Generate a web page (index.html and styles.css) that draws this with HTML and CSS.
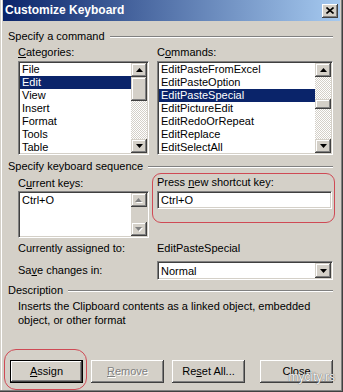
FILE: index.html
```html
<!DOCTYPE html>
<html lang="en">
<head>
  <meta charset="UTF-8" />
  <title>Customize Keyboard</title>
  <link rel="stylesheet" href="styles.css">
</head>
<body>
  <div class="window">
    <div class="titlebar">
      <span class="title">Customize Keyboard</span>
      <span class="close-btn">
        <svg width="8" height="7" viewBox="0 0 8 7"><path d="M0.5 0.5 L7.5 6.5 M7.5 0.5 L0.5 6.5" stroke="#000" stroke-width="1.6"/></svg>
      </span>
    </div>

    <div class="content">
      <!-- Specify a command -->
      <div class="group-head">Specify a command</div>
      <div class="cols labels">
        <div><u>C</u>ategories:</div>
        <div>C<u>o</u>mmands:</div>
      </div>
      <div class="cols lists">
        <div class="listbox">
          <ul class="items">
            <li>File</li>
            <li class="sel">Edit</li>
            <li>View</li>
            <li>Insert</li>
            <li>Format</li>
            <li>Tools</li>
            <li>Table</li>
          </ul>
          <div class="vscroll">
            <div class="sb-btn"><svg width="7" height="4" viewBox="0 0 7 4"><path d="M3.5 0 L7 4 L0 4 Z"/></svg></div>
            <div class="sb-thumb cat-thumb"></div>
            <div class="sb-track"></div>
            <div class="sb-btn"><svg width="7" height="4" viewBox="0 0 7 4"><path d="M0 0 L7 0 L3.5 4 Z"/></svg></div>
          </div>
        </div>
        <div class="listbox">
          <ul class="items">
            <li>EditPasteFromExcel</li>
            <li>EditPasteOption</li>
            <li class="sel">EditPasteSpecial</li>
            <li>EditPictureEdit</li>
            <li>EditRedoOrRepeat</li>
            <li>EditReplace</li>
            <li>EditSelectAll</li>
          </ul>
          <div class="vscroll">
            <div class="sb-btn"><svg width="7" height="4" viewBox="0 0 7 4"><path d="M3.5 0 L7 4 L0 4 Z"/></svg></div>
            <div class="sb-track cmd-gap"></div>
            <div class="sb-thumb cmd-thumb"></div>
            <div class="sb-track"></div>
            <div class="sb-btn"><svg width="7" height="4" viewBox="0 0 7 4"><path d="M0 0 L7 0 L3.5 4 Z"/></svg></div>
          </div>
        </div>
      </div>

      <!-- Specify keyboard sequence -->
      <div class="group-head seq-head">Specify keyboard sequence</div>
      <div class="cols seq">
        <div class="current">
          <div class="current-label">C<u>u</u>rrent keys:</div>
          <div class="keys-box">
            <div class="keys-text">Ctrl+O</div>
            <div class="keys-scroll">
              <div class="sb-btn disabled"><svg width="8" height="5" viewBox="0 0 8 5"><path d="M4.5 1 L8 5 L1 5 Z" fill="#fff"/><path d="M3.5 0 L7 4 L0 4 Z" fill="#808080"/></svg></div>
              <div class="keys-track"></div>
              <div class="sb-btn disabled"><svg width="8" height="5" viewBox="0 0 8 5"><path d="M1 1 L8 1 L4.5 5 Z" fill="#fff"/><path d="M0 0 L7 0 L3.5 4 Z" fill="#808080"/></svg></div>
            </div>
          </div>
        </div>
        <div class="hotkey-box">
          <div>Press <u>n</u>ew shortcut key:</div>
          <div class="field">Ctrl+O</div>
        </div>
      </div>

      <div class="cols assigned">
        <div>Currently assigned to:</div>
        <div>EditPasteSpecial</div>
      </div>
      <div class="cols save">
        <div>Sa<u>v</u>e changes in:</div>
        <div class="combo">
          <span class="combo-text">Normal</span>
          <span class="combo-btn"><svg width="7" height="4" viewBox="0 0 7 4"><path d="M0 0 L7 0 L3.5 4 Z"/></svg></span>
        </div>
      </div>

      <!-- Description -->
      <div class="group-head desc-head">Description</div>
      <p class="desc">Inserts the Clipboard contents as a linked object, embedded object, or other format</p>

      <div class="buttons">
        <div class="btn default ringed"><u>A</u>ssign</div>
        <div class="btn disabled"><u>R</u>emove</div>
        <div class="btn">Re<u>s</u>et All...</div>
        <div class="btn close">Close</div>
      </div>
    </div>

    <div class="watermark">mycity.rs</div>
  </div>
</body>
</html>
```

FILE: styles.css
```css
* {
  box-sizing: border-box;
}
body {
  margin: 0;
  background: #d4d0c8;
  font-family: "Liberation Sans", Arial, sans-serif;
  font-size: 11px;
  line-height: 13px;
  color: #000;
}
u {
  text-decoration: underline;
  text-underline-offset: 1px;
}
.window {
  position: relative;
  width: 343px;
  height: 392px;
  padding: 0 3px 3px;
  background: #d4d0c8;
  box-shadow: inset -1px -1px #404040, inset -2px -2px #808080, inset 1px 0 #d4d0c8, inset 2px 0 #fff;
}
.titlebar {
  display: flex;
  align-items: center;
  justify-content: space-between;
  height: 21px;
  padding: 0 2px 0 2px;
  background: linear-gradient(to right, #0a246a, #a6caf0);
}
.title {
  color: #fff;
  font-weight: bold;
  font-size: 12px;
}
.close-btn {
  display: flex;
  align-items: center;
  justify-content: center;
  width: 16px;
  height: 14px;
  background: #d4d0c8;
  box-shadow: inset -1px -1px #404040, inset 1px 1px #fff, inset -2px -2px #808080;
}
.content {
  padding: 9px 7px 0 5px;
}
.group-head {
  display: flex;
  align-items: center;
  gap: 5px;
  height: 13px;
}
.group-head::after {
  content: "";
  flex: 1;
  border-top: 1px solid #808080;
  border-bottom: 1px solid #fff;
}
.cols {
  display: grid;
  grid-template-columns: 131px 176px;
  column-gap: 8px;
  margin-left: 10px;
}
.labels {
  margin-top: 3px;
}
.lists {
  margin-top: 2px;
}

/* list boxes */
.listbox {
  display: flex;
  height: 94px;
  padding: 1px;
  background: #fff;
  border: 1px solid;
  border-color: #808080 #fff #fff #808080;
  box-shadow: inset 1px 1px #404040, inset -1px -1px #d4d0c8;
  overflow: hidden;
}
.items {
  flex: 1;
  min-width: 0;
  margin: 0;
  padding: 0;
  list-style: none;
}
.items li {
  height: 13px;
  padding-left: 2px;
  white-space: nowrap;
  overflow: hidden;
}
.items li.sel {
  background: #0a246a;
  color: #fff;
}
.vscroll {
  display: flex;
  flex-direction: column;
  width: 16px;
  background: repeating-conic-gradient(#fff 0 25%, #d4d0c8 0 50%) 0 0 / 2px 2px;
}
.sb-btn {
  display: flex;
  align-items: center;
  justify-content: center;
  height: 14px;
  flex-shrink: 0;
  background: #d4d0c8;
  box-shadow: inset -1px -1px #404040, inset 1px 1px #d4d0c8, inset -2px -2px #808080, inset 2px 2px #fff;
}
.sb-track {
  flex: 1;
}
.sb-thumb {
  flex-shrink: 0;
  background: #d4d0c8;
  box-shadow: inset -1px -1px #404040, inset 1px 1px #d4d0c8, inset -2px -2px #808080, inset 2px 2px #fff;
}
.cat-thumb {
  height: 24px;
}
.cmd-gap {
  flex: 0 0 22px;
}
.cmd-thumb {
  height: 10px;
}

/* keyboard sequence */
.seq-head {
  margin-top: 5px;
}
.current-label {
  margin-top: 4px;
}
.keys-box {
  display: flex;
  height: 47px;
  margin-top: 1px;
  padding: 1px;
  background: #fff;
  border: 1px solid;
  border-color: #808080 #fff #fff #808080;
  box-shadow: inset 1px 1px #404040, inset -1px -1px #d4d0c8;
}
.keys-text {
  flex: 1;
  padding: 1px 2px;
}
.keys-scroll {
  display: flex;
  flex-direction: column;
  width: 16px;
  background: #d4d0c8;
}
.keys-track {
  flex: 1;
}
.hotkey-box {
  margin: 0 -2px 0 -5px;
  height: 50px;
  padding: 2px 2px 0 4px;
  border: 1px solid #cf4a55;
  border-radius: 9px;
}
.field {
  height: 18px;
  margin-top: 2px;
  padding: 2px 3px;
  line-height: 12px;
  background: #fff;
  border: 1px solid;
  border-color: #808080 #fff #fff #808080;
  box-shadow: inset 1px 1px #404040, inset -1px -1px #d4d0c8;
}
.assigned {
  margin-top: 4px;
}
.save {
  margin-top: 6px;
  align-items: center;
}
.combo {
  display: flex;
  height: 19px;
  padding: 1px;
  background: #fff;
  border: 1px solid;
  border-color: #808080 #fff #fff #808080;
  box-shadow: inset 1px 1px #404040, inset -1px -1px #d4d0c8;
}
.combo-text {
  flex: 1;
  padding: 2px 2px 0;
}
.combo-btn {
  display: flex;
  align-items: center;
  justify-content: center;
  width: 16px;
  background: #d4d0c8;
  box-shadow: inset -1px -1px #404040, inset 1px 1px #d4d0c8, inset -2px -2px #808080, inset 2px 2px #fff;
}

/* description */
.desc-head {
  margin-top: 4px;
}
.desc {
  margin: 2px 20px 0 10px;
  line-height: 14px;
}

/* buttons */
.buttons {
  display: flex;
  gap: 8px;
  margin: 33px 0 0 2px;
}
.btn {
  position: relative;
  width: 73px;
  height: 23px;
  line-height: 23px;
  text-align: center;
  background: #d4d0c8;
  box-shadow: inset -1px -1px #404040, inset 1px 1px #fff, inset -2px -2px #808080;
}
.btn.default {
  box-shadow: inset 0 0 0 1px #000, inset -2px -2px #404040, inset 2px 2px #fff, inset -3px -3px #808080;
}
.btn.disabled {
  color: #808080;
  text-shadow: 1px 1px #fff;
}
.btn.close {
  margin-left: auto;
}
.ringed::after {
  content: "";
  position: absolute;
  top: -11px;
  bottom: -7px;
  left: -6px;
  right: -4px;
  border: 1px solid #cf4a55;
  border-radius: 12px;
}
.watermark {
  position: absolute;
  right: 8px;
  bottom: 8px;
  font-size: 12px;
  color: #f4f4f4;
  text-shadow: 0 0 1px #6a6a6a, 0 0 1px #6a6a6a;
}
```
